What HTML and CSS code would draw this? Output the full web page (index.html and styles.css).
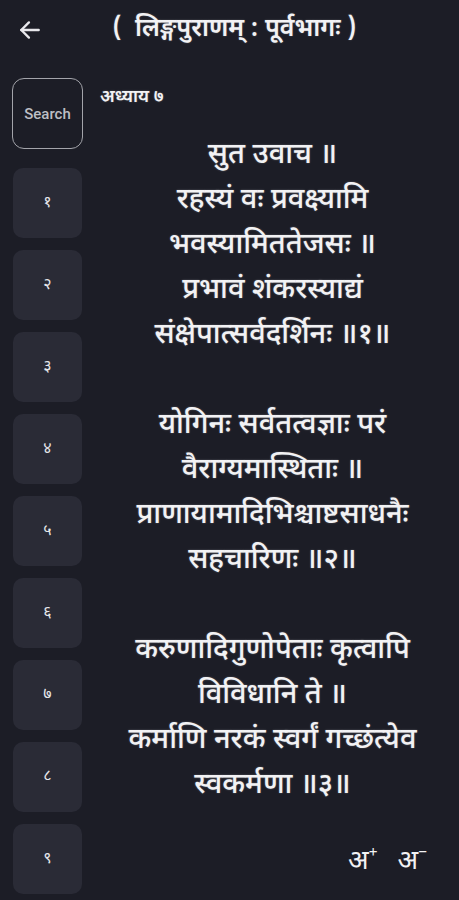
FILE: index.html
```html
<!DOCTYPE html>
<html lang="sa">

<head>
    <meta charset="UTF-8" />
    <meta name="viewport" content="width=device-width, initial-scale=1.0" />
    <title>लिङ्गपुराणम्</title>
    <link rel="stylesheet" href="styles.css">
</head>

<body>
    <div class="header">
        <button class="back-btn" type="button">
            <svg width="26" height="26" viewBox="0 0 24 24" fill="none" stroke="#e8e8ec" stroke-width="2.2" stroke-linecap="round" stroke-linejoin="round">
                <path d="M20 12H4" />
                <path d="M11 5l-7 7 7 7" />
            </svg>
        </button>
        <h1 class="title">(&nbsp; लिङ्गपुराणम् : पूर्वभागः )</h1>
        <div></div>
    </div>

    <div class="reader">
        <div class="sidebar">
            <button class="search-btn" type="button">Search</button>
            <button class="num-btn" type="button">१</button>
            <button class="num-btn" type="button">२</button>
            <button class="num-btn" type="button">३</button>
            <button class="num-btn" type="button">४</button>
            <button class="num-btn" type="button">५</button>
            <button class="num-btn" type="button">६</button>
            <button class="num-btn" type="button">७</button>
            <button class="num-btn" type="button">८</button>
            <button class="num-btn" type="button">९</button>
        </div>

        <div class="content">
            <div class="chapter">अध्याय ७</div>
            <div class="verses">
                <p>सुत उवाच ॥</p>
                <p>रहस्यं वः प्रवक्ष्यामि</p>
                <p>भवस्यामिततेजसः ॥</p>
                <p>प्रभावं शंकरस्याद्यं</p>
                <p>संक्षेपात्सर्वदर्शिनः ॥१॥</p>
                <p class="gap"></p>
                <p>योगिनः सर्वतत्वज्ञाः परं</p>
                <p>वैराग्यमास्थिताः ॥</p>
                <p>प्राणायामादिभिश्चाष्टसाधनैः</p>
                <p>सहचारिणः ॥२॥</p>
                <p class="gap"></p>
                <p>करुणादिगुणोपेताः कृत्वापि</p>
                <p>विविधानि ते ॥</p>
                <p>कर्माणि नरकं स्वर्गं गच्छंत्येव</p>
                <p>स्वकर्मणा ॥३॥</p>
            </div>
        </div>
    </div>

    <div class="font-controls">
        <button class="font-btn" type="button">अ<sup>+</sup></button>
        <button class="font-btn" type="button">अ<sup>−</sup></button>
    </div>
</body>

</html>
```

FILE: styles.css
```css
body {
    margin: 0;
    background-color: #1c1d26;
    color: #f2f2f4;
    font-family: "Noto Sans Devanagari", "Lohit Devanagari", "Noto Sans", sans-serif;
    height: 900px;
    overflow: hidden;
}

button {
    font-family: inherit;
    cursor: pointer;
}

.header {
    display: grid;
    grid-template-columns: 60px 1fr 60px;
    align-items: center;
    height: 60px;
}

.back-btn {
    background: none;
    border: none;
    padding: 0 0 0 17px;
    display: flex;
    align-items: center;
}

.title {
    margin: 0;
    text-align: center;
    font-size: 25px;
    font-weight: 600;
    padding-left: 10px;
    white-space: nowrap;
    text-shadow: 0 0 2px rgba(255, 255, 255, 0.25);
}

.reader {
    display: flex;
}

.sidebar {
    width: 95px;
    flex-shrink: 0;
    display: flex;
    flex-direction: column;
    align-items: flex-start;
    gap: 12px;
    padding: 18px 0 0 12px;
    box-sizing: border-box;
}

.search-btn {
    width: 71px;
    height: 71px;
    margin-bottom: 7px;
    background: transparent;
    border: 1.5px solid #a3a4aa;
    border-radius: 12px;
    color: #bdbec4;
    font-family: Roboto, "Noto Sans", sans-serif;
    font-size: 15px;
    font-weight: 500;
    padding: 0;
}

.num-btn {
    width: 69px;
    height: 70px;
    margin-left: 1px;
    background-color: #2a2b36;
    border: none;
    border-radius: 10px;
    color: #e6e6ea;
    font-size: 16px;
    padding: 0;
}

.content {
    flex: 1;
    padding: 25px 14px 0 5px;
}

.chapter {
    font-size: 18px;
    font-weight: 600;
    line-height: 26px;
    text-shadow: 0 0 2px rgba(255, 255, 255, 0.25);
}

.verses {
    margin-top: 23px;
    text-align: center;
}

.verses p {
    margin: 0;
    font-size: 29px;
    font-weight: 500;
    line-height: 45px;
    height: 45px;
    white-space: nowrap;
    text-shadow: 0 0 2px rgba(255, 255, 255, 0.3);
}

.font-controls {
    position: absolute;
    right: 28px;
    bottom: 24px;
    display: flex;
    gap: 16px;
}

.font-btn {
    background: none;
    border: none;
    padding: 0 4px 0 0;
    color: #f2f2f4;
    font-size: 27px;
    line-height: 1;
}

.font-btn sup {
    font-size: 16px;
    vertical-align: 12px;
}
```
